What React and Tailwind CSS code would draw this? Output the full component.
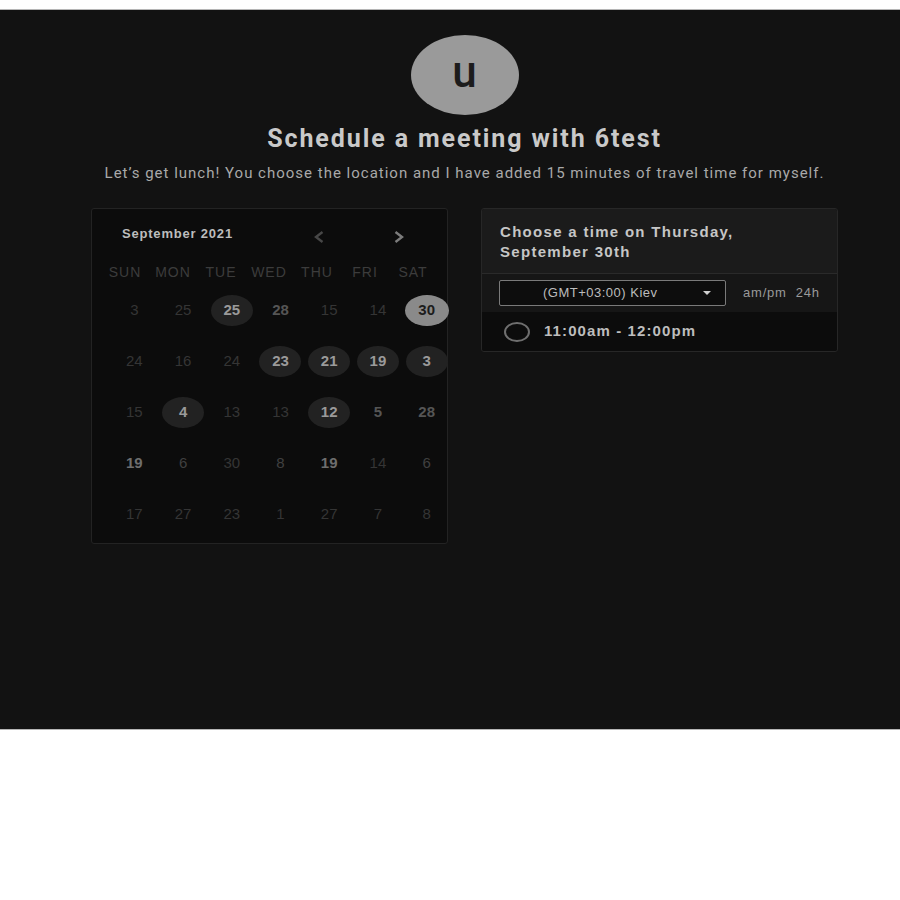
import React from "react";

const rows = [
  [["3", "dim"], ["25", "dim"], ["25", "avail"], ["28", "mid"], ["15", "dim"], ["14", "dim"], ["30", "sel"]],
  [["24", "dim"], ["16", "dim"], ["24", "dim"], ["23", "avail"], ["21", "avail"], ["19", "avail"], ["3", "avail"]],
  [["15", "dim"], ["4", "avail"], ["13", "dim"], ["13", "dim"], ["12", "avail"], ["5", "mid"], ["28", "mid"]],
  [["19", "bright"], ["6", "dim2"], ["30", "dim"], ["8", "dim2"], ["19", "bright"], ["14", "dim"], ["6", "dim2"]],
  [["17", "dim"], ["27", "dim"], ["23", "dim"], ["1", "dim"], ["27", "dim"], ["7", "dim"], ["8", "dim"]],
];

const days = ["SUN", "MON", "TUE", "WED", "THU", "FRI", "SAT"];

function DateCell({ n, kind }) {
  if (kind === "sel") {
    return (
      <div className="flex items-center justify-center">
        <div className="w-[44px] h-[31px] rounded-[50%] bg-[#8a8a8a] flex items-center justify-center text-[15px] font-bold text-[#1c1c1c]">
          {n}
        </div>
      </div>
    );
  }
  if (kind === "avail") {
    return (
      <div className="flex items-center justify-center">
        <div className="w-[42px] h-[31px] rounded-[50%] bg-[#222222] flex items-center justify-center text-[15px] font-bold text-[#9a9a9a]">
          {n}
        </div>
      </div>
    );
  }
  const cls =
    kind === "mid"
      ? "text-[#555555] font-bold"
      : kind === "bright"
      ? "text-[#6e6e6e] font-bold"
      : kind === "dim2"
      ? "text-[#404040]"
      : "text-[#353535]";
  return (
    <div className="flex items-center justify-center">
      <span className={`text-[15px] ${cls}`}>{n}</span>
    </div>
  );
}

export default function App() {
  return (
    <div className="bg-white h-[900px] pt-[9px] font-['Liberation_Sans',Arial,sans-serif]">
      <div className="bg-[#121212] h-[721px] border-y border-[#b5b5b5] pl-[29px] flex flex-col items-center">
        <div className="mt-[25px] w-[108px] h-[80px] rounded-[50%] bg-[#9a9a9a] flex items-center justify-center">
          <span className="font-['Roboto',sans-serif] font-medium text-[44px] leading-none text-[#1c1c1c] -mt-[6px]">u</span>
        </div>
        <h1 className="mt-[10px] h-[28px] leading-[28px] font-['Roboto',sans-serif] font-bold text-[25px] tracking-[1.9px] text-[#c9c9c9]">
          Schedule a meeting with 6test
        </h1>
        <p className="mt-[10px] h-[20px] leading-[20px] font-['Roboto',sans-serif] text-[15px] tracking-[1px] text-[#a9a9a9]">
          Let’s get lunch! You choose the location and I have added 15 minutes of travel time for myself.
        </p>

        <div className="mt-[25px] flex items-start gap-[33px]">
          {/* Calendar */}
          <div className="w-[357px] h-[336px] border border-[#232323] rounded-[3px] bg-[#0c0c0c]">
            <div className="h-[50px] flex items-center">
              <span className="pl-[30px] text-[13px] font-bold tracking-[0.8px] text-[#bdbdbd]">September 2021</span>
              <div className="ml-[81px] mt-[6px] flex items-center">
                <svg width="10" height="12" viewBox="0 0 10 12" className="block">
                  <path d="M8.5 1 L2 6 L8.5 11" fill="none" stroke="#474747" strokeWidth="2.4" />
                </svg>
                <svg width="10" height="12" viewBox="0 0 10 12" className="block ml-[70px]">
                  <path d="M1.5 1 L8 6 L1.5 11" fill="none" stroke="#7c7c7c" strokeWidth="2.4" />
                </svg>
              </div>
            </div>
            <div className="ml-[9px] w-[336px] h-[26px] grid grid-cols-7 items-center">
              {days.map((d) => (
                <div key={d} className="text-center text-[14px] tracking-[1px] text-[#3c3c3c]">
                  {d}
                </div>
              ))}
            </div>
            <div className="ml-[18px] w-[341px]">
              {rows.map((r, i) => (
                <div key={i} className="grid grid-cols-7 h-[51px] items-center">
                  {r.map(([n, k], j) => (
                    <DateCell key={j} n={n} kind={k} />
                  ))}
                </div>
              ))}
            </div>
          </div>

          {/* Time picker */}
          <div className="w-[357px] border border-[#272727] rounded-[3px] bg-[#161616] overflow-hidden">
            <div className="h-[65px] bg-[#1b1b1b] pl-[18px] pt-[13px] border-b border-[#2a2a2a]">
              <p className="text-[15px] leading-[20px] font-bold tracking-[1.3px] text-[#c6c6c6]">
                Choose a time on Thursday,
                <br />
                September 30th
              </p>
            </div>
            <div className="h-[38px] flex items-center pl-[17px]">
              <div className="w-[227px] h-[26px] border border-[#7a7a7a] rounded-[2px] bg-[#0d0d0d] flex items-center pl-[43px] pr-[14px]">
                <span className="text-[13px] tracking-[0.5px] text-[#bcbcbc]">(GMT+03:00) Kiev</span>
                <svg width="8" height="4" viewBox="0 0 8 4" className="ml-auto block">
                  <path d="M0 0 L8 0 L4 4 Z" fill="#cfcfcf" />
                </svg>
              </div>
              <span className="ml-[17px] text-[13px] tracking-[0.8px] text-[#9a9a9a]">am/pm</span>
              <span className="ml-[9px] text-[13px] tracking-[0.8px] text-[#9a9a9a]">24h</span>
            </div>
            <div className="h-[39px] bg-[#0c0c0c] flex items-center pl-[22px]">
              <div className="w-[26px] h-[20px] rounded-[50%] border-2 border-[#6f6f6f]" />
              <span className="ml-[14px] text-[15px] font-bold tracking-[1.1px] text-[#bdbdbd]">11:00am - 12:00pm</span>
            </div>
          </div>
        </div>
      </div>
    </div>
  );
}
